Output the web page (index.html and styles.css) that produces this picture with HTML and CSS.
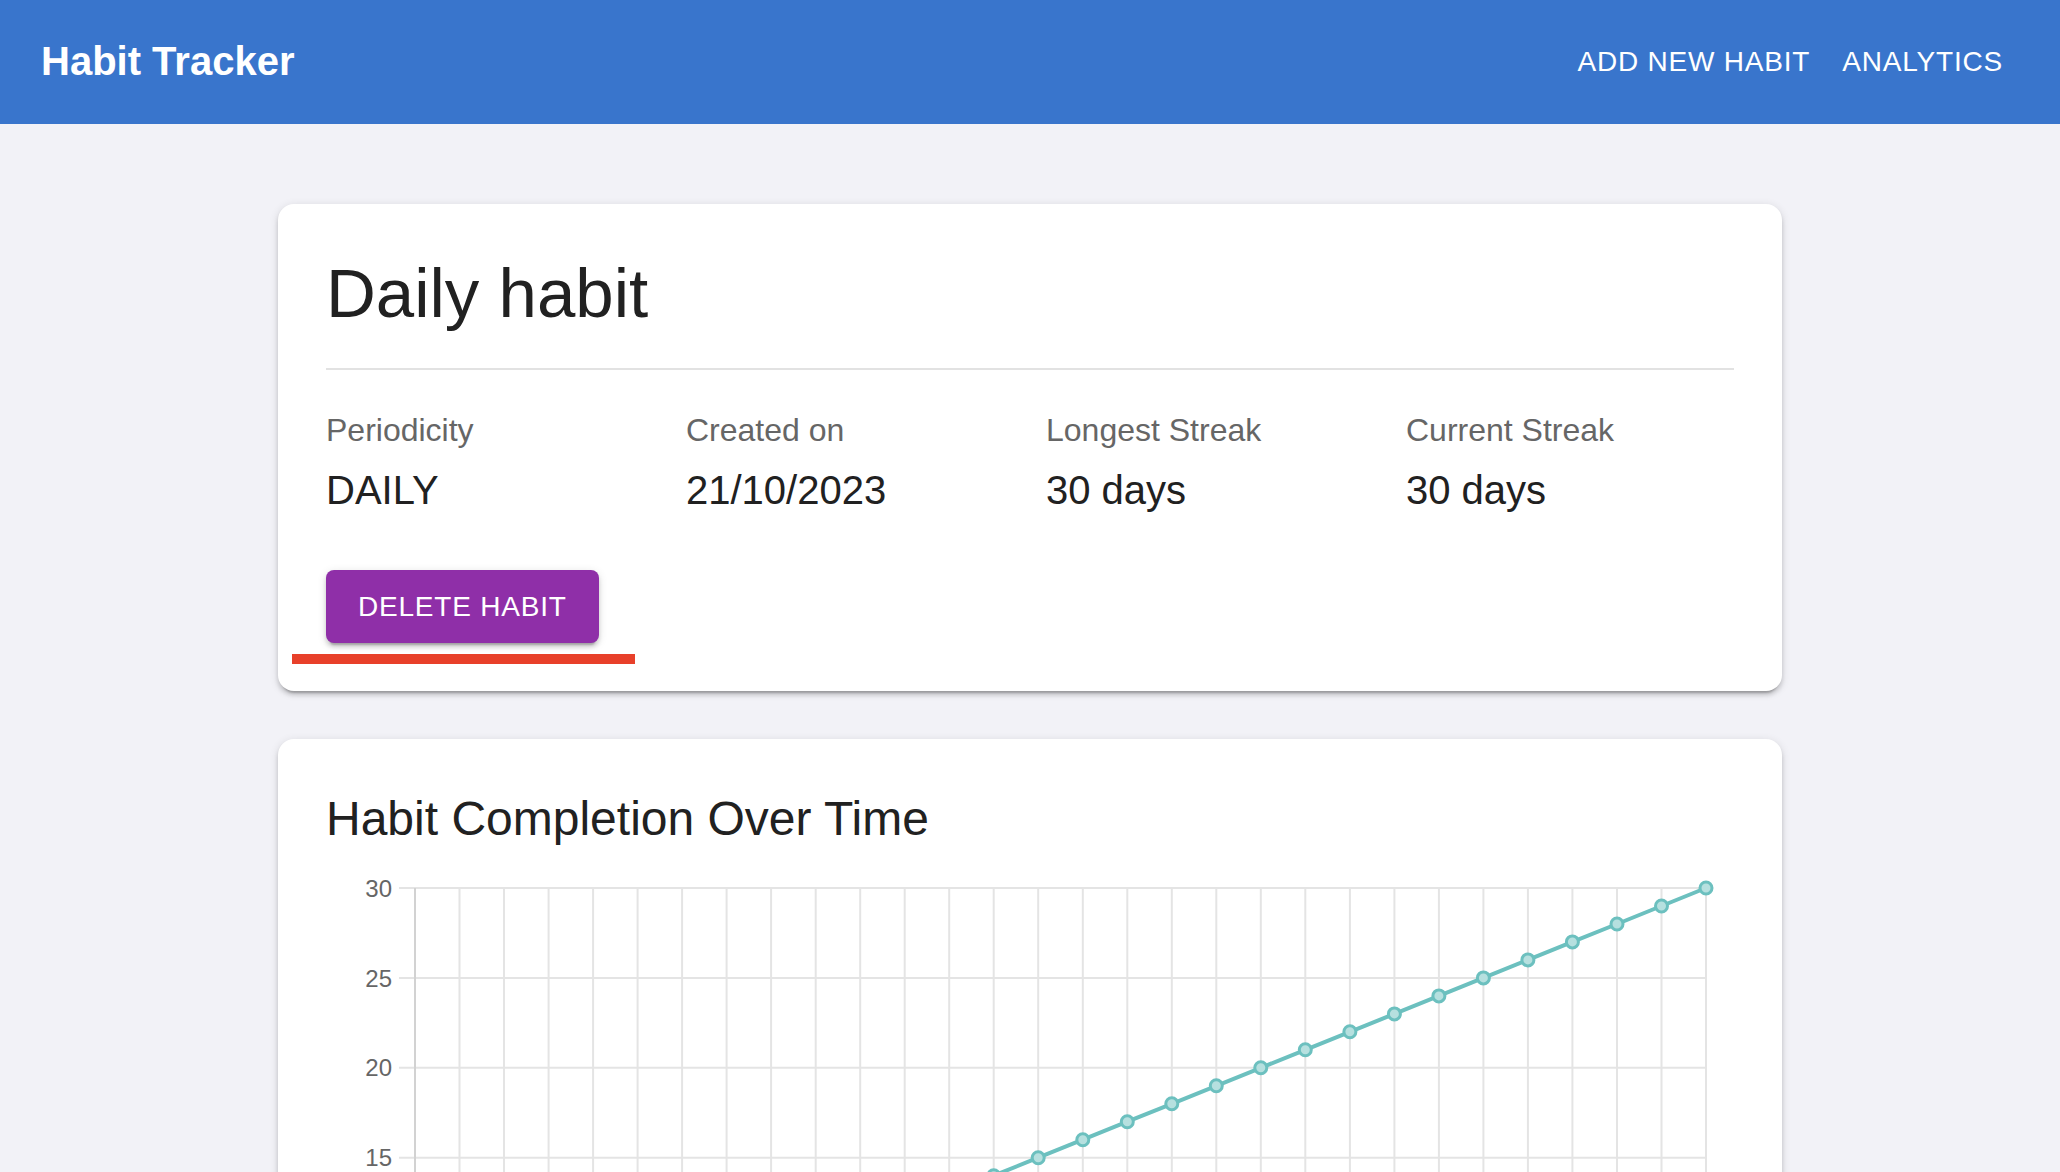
FILE: index.html
```html
<!DOCTYPE html>
<html lang="en">
<head>
<meta charset="utf-8">
<title>Habit Tracker</title>
<link rel="stylesheet" href="styles.css">
</head>
<body>
<header class="appbar">
  <div class="brand">Habit Tracker</div>
  <nav class="nav">
    <a class="nav-link" href="#">ADD NEW HABIT</a>
    <a class="nav-link" href="#">ANALYTICS</a>
  </nav>
</header>
<main class="container">
  <section class="card">
    <h1 class="habit-title">Daily habit</h1>
    <hr class="divider">
    <div class="stats">
      <div class="stat"><div class="stat-label">Periodicity</div><div class="stat-value">DAILY</div></div>
      <div class="stat"><div class="stat-label">Created on</div><div class="stat-value">21/10/2023</div></div>
      <div class="stat"><div class="stat-label">Longest Streak</div><div class="stat-value">30 days</div></div>
      <div class="stat"><div class="stat-label">Current Streak</div><div class="stat-value">30 days</div></div>
    </div>
    <div class="actions">
      <button class="btn-delete" type="button">DELETE HABIT</button>
      <span class="highlight"></span>
    </div>
  </section>
  <section class="card chart-card">
    <h2 class="chart-title">Habit Completion Over Time</h2>
    <svg class="chart" width="1408" height="640" viewBox="0 0 1408 640">
      <g class="grid">
        <line x1="73" y1="37" x2="1380" y2="37"/>
        <line x1="73" y1="126.9" x2="1380" y2="126.9"/>
        <line x1="73" y1="216.8" x2="1380" y2="216.8"/>
        <line x1="73" y1="306.7" x2="1380" y2="306.7"/>
        <line x1="73" y1="396.6" x2="1380" y2="396.6"/>
        <line x1="73" y1="486.5" x2="1380" y2="486.5"/>
        <line x1="73" y1="576.4" x2="1380" y2="576.4"/>
        <line x1="133.5" y1="37" x2="133.5" y2="592"/>
        <line x1="178" y1="37" x2="178" y2="592"/>
        <line x1="222.6" y1="37" x2="222.6" y2="592"/>
        <line x1="267.1" y1="37" x2="267.1" y2="592"/>
        <line x1="311.6" y1="37" x2="311.6" y2="592"/>
        <line x1="356.1" y1="37" x2="356.1" y2="592"/>
        <line x1="400.6" y1="37" x2="400.6" y2="592"/>
        <line x1="445.1" y1="37" x2="445.1" y2="592"/>
        <line x1="489.7" y1="37" x2="489.7" y2="592"/>
        <line x1="534.2" y1="37" x2="534.2" y2="592"/>
        <line x1="578.7" y1="37" x2="578.7" y2="592"/>
        <line x1="623.2" y1="37" x2="623.2" y2="592"/>
        <line x1="667.7" y1="37" x2="667.7" y2="592"/>
        <line x1="712.2" y1="37" x2="712.2" y2="592"/>
        <line x1="756.8" y1="37" x2="756.8" y2="592"/>
        <line x1="801.3" y1="37" x2="801.3" y2="592"/>
        <line x1="845.8" y1="37" x2="845.8" y2="592"/>
        <line x1="890.3" y1="37" x2="890.3" y2="592"/>
        <line x1="934.8" y1="37" x2="934.8" y2="592"/>
        <line x1="979.3" y1="37" x2="979.3" y2="592"/>
        <line x1="1023.9" y1="37" x2="1023.9" y2="592"/>
        <line x1="1068.4" y1="37" x2="1068.4" y2="592"/>
        <line x1="1112.9" y1="37" x2="1112.9" y2="592"/>
        <line x1="1157.4" y1="37" x2="1157.4" y2="592"/>
        <line x1="1201.9" y1="37" x2="1201.9" y2="592"/>
        <line x1="1246.4" y1="37" x2="1246.4" y2="592"/>
        <line x1="1291" y1="37" x2="1291" y2="592"/>
        <line x1="1335.5" y1="37" x2="1335.5" y2="592"/>
        <line x1="1380" y1="37" x2="1380" y2="592"/>
      </g>
      <line class="axis" x1="89" y1="37" x2="89" y2="592"/>
      <g class="ticks">
        <text x="66" y="37" dy="0.36em">30</text>
        <text x="66" y="126.9" dy="0.36em">25</text>
        <text x="66" y="216.8" dy="0.36em">20</text>
        <text x="66" y="306.7" dy="0.36em">15</text>
        <text x="66" y="396.6" dy="0.36em">10</text>
        <text x="66" y="486.5" dy="0.36em">5</text>
        <text x="66" y="576.4" dy="0.36em">0</text>
      </g>
      <polyline class="series" points="89,558.4 133.5,540.4 178,522.5 222.6,504.5 267.1,486.5 311.6,468.5 356.1,450.5 400.6,432.6 445.1,414.6 489.7,396.6 534.2,378.6 578.7,360.6 623.2,342.7 667.7,324.7 712.2,306.7 756.8,288.7 801.3,270.7 845.8,252.8 890.3,234.8 934.8,216.8 979.3,198.8 1023.9,180.8 1068.4,162.9 1112.9,144.9 1157.4,126.9 1201.9,108.9 1246.4,90.9 1291,73 1335.5,55 1380,37"/>
      <g class="points">
        <circle cx="89" cy="558.4" r="6"/>
        <circle cx="133.5" cy="540.4" r="6"/>
        <circle cx="178" cy="522.5" r="6"/>
        <circle cx="222.6" cy="504.5" r="6"/>
        <circle cx="267.1" cy="486.5" r="6"/>
        <circle cx="311.6" cy="468.5" r="6"/>
        <circle cx="356.1" cy="450.5" r="6"/>
        <circle cx="400.6" cy="432.6" r="6"/>
        <circle cx="445.1" cy="414.6" r="6"/>
        <circle cx="489.7" cy="396.6" r="6"/>
        <circle cx="534.2" cy="378.6" r="6"/>
        <circle cx="578.7" cy="360.6" r="6"/>
        <circle cx="623.2" cy="342.7" r="6"/>
        <circle cx="667.7" cy="324.7" r="6"/>
        <circle cx="712.2" cy="306.7" r="6"/>
        <circle cx="756.8" cy="288.7" r="6"/>
        <circle cx="801.3" cy="270.7" r="6"/>
        <circle cx="845.8" cy="252.8" r="6"/>
        <circle cx="890.3" cy="234.8" r="6"/>
        <circle cx="934.8" cy="216.8" r="6"/>
        <circle cx="979.3" cy="198.8" r="6"/>
        <circle cx="1023.9" cy="180.8" r="6"/>
        <circle cx="1068.4" cy="162.9" r="6"/>
        <circle cx="1112.9" cy="144.9" r="6"/>
        <circle cx="1157.4" cy="126.9" r="6"/>
        <circle cx="1201.9" cy="108.9" r="6"/>
        <circle cx="1246.4" cy="90.9" r="6"/>
        <circle cx="1291" cy="73" r="6"/>
        <circle cx="1335.5" cy="55" r="6"/>
        <circle cx="1380" cy="37" r="6"/>
      </g>
    </svg>
  </section>
</main>
</body>
</html>
```
FILE: styles.css
```css
* {
  box-sizing: border-box;
}

html, body {
  margin: 0;
  padding: 0;
}

body {
  background: #f2f2f7;
  font-family: "Liberation Sans", Arial, Helvetica, sans-serif;
  color: #212121;
}

.appbar {
  height: 124px;
  background: #3975cc;
  color: #fff;
  display: flex;
  align-items: center;
  justify-content: space-between;
  padding: 0 41px 0 41px;
}

.brand {
  font-size: 40px;
  font-weight: 700;
  line-height: 1.6;
  margin-top: -2px;
}

.nav {
  display: flex;
  align-items: center;
  margin-top: -2px;
}

.nav-link {
  color: #fff;
  text-decoration: none;
  font-size: 28px;
  letter-spacing: 0.8px;
  line-height: 49px;
  padding: 12px 16px;
}

.container {
  width: 1504px;
  margin: 0 auto;
  padding-top: 80px;
  display: flex;
  flex-direction: column;
  gap: 48px;
}

.card {
  background: #fff;
  border-radius: 16px;
  padding: 48px;
  box-shadow: 0 6px 2px -4px rgba(0, 0, 0, 0.2), 0 4px 4px 0 rgba(0, 0, 0, 0.14), 0 2px 10px 0 rgba(0, 0, 0, 0.12);
}

.habit-title {
  margin: 0 0 32px;
  font-size: 69px;
  font-weight: 400;
  line-height: 84px;
  color: #212121;
}

.divider {
  margin: 0;
  border: none;
  height: 2px;
  background: #e2e2e2;
}

.stats {
  margin-top: 36px;
  display: grid;
  grid-template-columns: repeat(4, 1fr);
  column-gap: 32px;
}

.stat-label {
  font-size: 32px;
  line-height: 48px;
  color: #666;
}

.stat-value {
  margin-top: 4px;
  font-size: 40px;
  line-height: 64px;
  color: #212121;
}

.actions {
  position: relative;
  margin-top: 48px;
  display: flex;
}

.btn-delete {
  font-family: "Liberation Sans", Arial, Helvetica, sans-serif;
  font-size: 28px;
  line-height: 49px;
  letter-spacing: 0.8px;
  padding: 12px 32px;
  border: none;
  border-radius: 8px;
  background: #8f2fa8;
  color: #fff;
  box-shadow: 0 6px 2px -4px rgba(0, 0, 0, 0.2), 0 4px 4px 0 rgba(0, 0, 0, 0.14), 0 2px 10px 0 rgba(0, 0, 0, 0.12);
}

.highlight {
  position: absolute;
  left: -34px;
  top: 84px;
  width: 343px;
  height: 10px;
  background: #e8402a;
}

.chart-card {
  padding-bottom: 48px;
}

.chart-title {
  margin: 0;
  font-size: 48px;
  font-weight: 400;
  line-height: 64px;
  color: #212121;
}

.chart {
  display: block;
}

.grid line {
  stroke: #e4e4e4;
  stroke-width: 2;
}

.axis {
  stroke: #d2d2d2;
  stroke-width: 2;
}

.ticks text {
  font-family: "Liberation Sans", Arial, Helvetica, sans-serif;
  font-size: 24px;
  fill: #666;
  text-anchor: end;
}

.series {
  fill: none;
  stroke: #6cc0bf;
  stroke-width: 4;
  stroke-linejoin: round;
}

.points circle {
  fill: #b6e0df;
  stroke: #6cc0bf;
  stroke-width: 3;
}
```
